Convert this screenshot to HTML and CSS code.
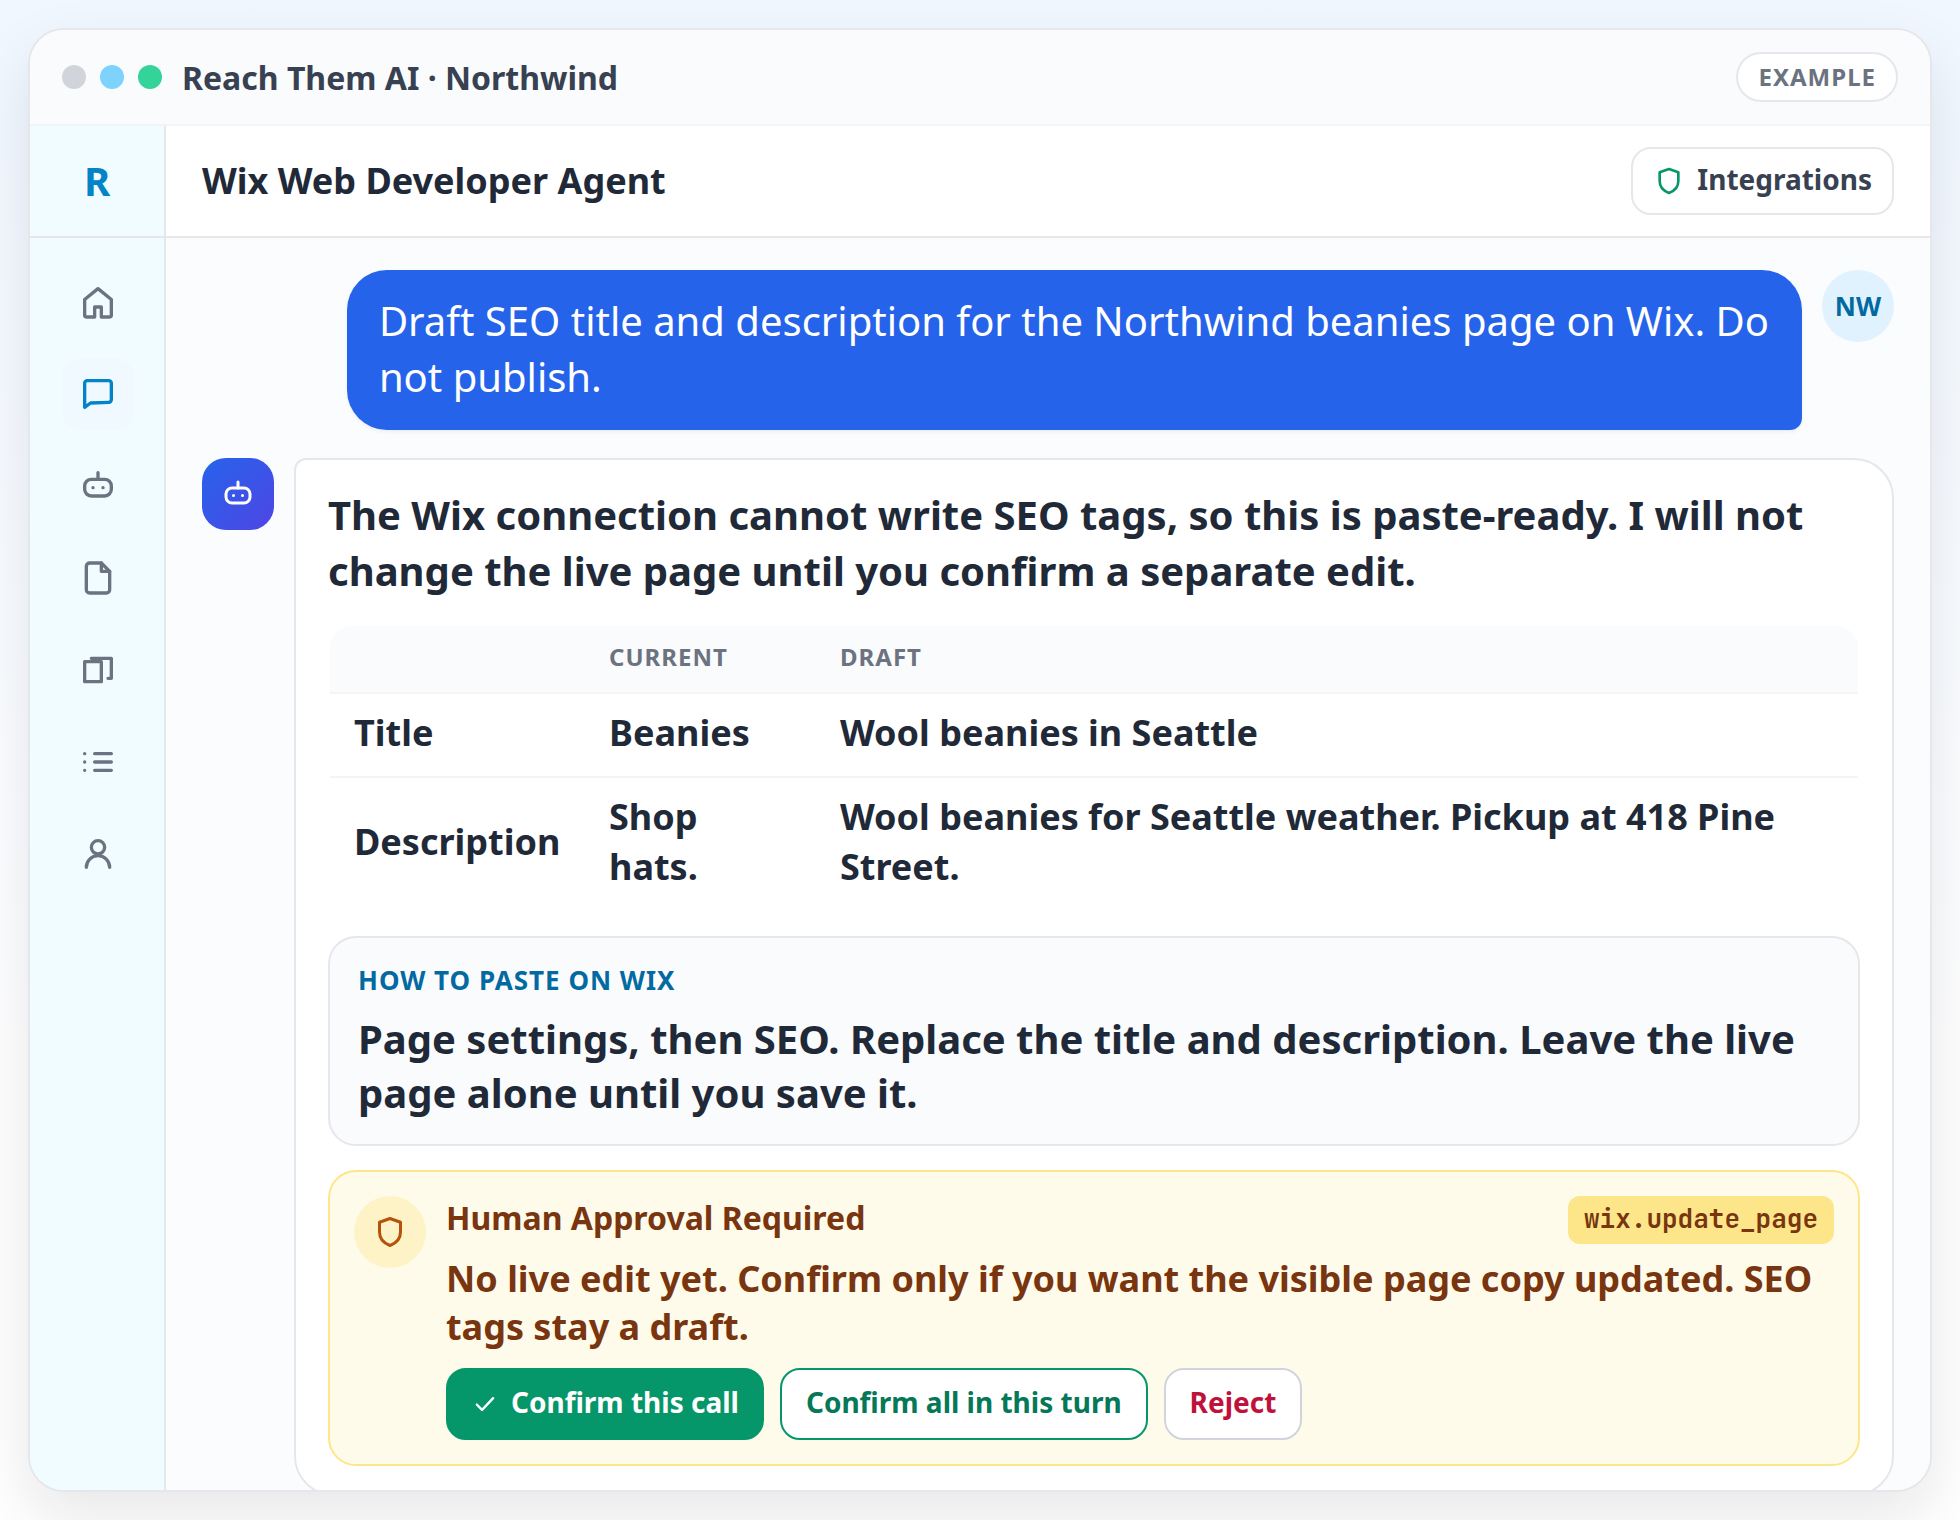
FILE: index.html
```html
<!DOCTYPE html>
<html lang="en">

<head>
  <meta charset="utf-8">
  <title>Reach Them AI · Northwind</title>
  <meta name="viewport" content="width=device-width, initial-scale=1.0">
  <link rel="stylesheet" href="styles.css">
</head>

<body>
  <div class="window">
    <header class="titlebar">
      <span class="dot dot-gray"></span>
      <span class="dot dot-blue"></span>
      <span class="dot dot-green"></span>
      <span class="titlebar-name">Reach Them AI · Northwind</span>
      <span class="pill">EXAMPLE</span>
    </header>

    <div class="app">
      <aside class="sidebar">
        <div class="logo">R</div>
        <nav class="nav">
          <a href="#home" class="nav-item" aria-label="Home">
            <svg class="icon" viewBox="0 0 24 24"><path d="M4 10.5 12 4l8 6.5V20a1 1 0 0 1-1 1h-5v-6h-4v6H5a1 1 0 0 1-1-1z"/></svg>
          </a>
          <a href="#chat" class="nav-item active" aria-label="Chat">
            <svg class="icon" viewBox="0 0 24 24"><path d="M4 20V5.5A1.5 1.5 0 0 1 5.5 4h13A1.5 1.5 0 0 1 20 5.5v10a1.5 1.5 0 0 1-1.5 1.5L7.5 17.4z"/></svg>
          </a>
          <a href="#agents" class="nav-item" aria-label="Agents">
            <svg class="icon" viewBox="0 0 24 24"><rect x="4" y="8" width="16" height="10" rx="4"/><path d="M12 8V4M9 13h.01M15 13h.01"/></svg>
          </a>
          <a href="#files" class="nav-item" aria-label="Files">
            <svg class="icon" viewBox="0 0 24 24"><path d="M7 3h7l5 5v11a2 2 0 0 1-2 2H7a2 2 0 0 1-2-2V5a2 2 0 0 1 2-2z"/><path d="M14 3v5h5"/></svg>
          </a>
          <a href="#library" class="nav-item" aria-label="Library">
            <svg class="icon" viewBox="0 0 24 24"><path d="M4 7h10v12H4zM8 5h12v12h-2"/></svg>
          </a>
          <a href="#tasks" class="nav-item" aria-label="Tasks">
            <svg class="icon" viewBox="0 0 24 24"><path d="M10 7h10M10 12h10M10 17h10M4 7h.01M4 12h.01M4 17h.01"/></svg>
          </a>
          <a href="#profile" class="nav-item" aria-label="Profile">
            <svg class="icon" viewBox="0 0 24 24"><circle cx="12" cy="8" r="4"/><path d="M5 20a7 7 0 0 1 14 0"/></svg>
          </a>
        </nav>
      </aside>

      <main class="main">
        <div class="topbar">
          <h1>Wix Web Developer Agent</h1>
          <button type="button" class="btn btn-integrations">
            <svg class="icon icon-shield" viewBox="0 0 24 24"><path d="M12 3l7 2.5V12c0 4.5-3 7.5-7 9-4-1.5-7-4.5-7-9V5.5z"/></svg>
            <span>Integrations</span>
          </button>
        </div>

        <div class="chat">
          <div class="row row-user">
            <p class="bubble">Draft SEO title and description for the Northwind beanies page on Wix. Do not publish.</p>
            <span class="avatar">NW</span>
          </div>

          <div class="row">
            <span class="avatar avatar-agent">
              <svg class="icon icon-agent" viewBox="0 0 24 24"><rect x="4" y="8" width="16" height="10" rx="4"/><path d="M12 8V4M9 13h.01M15 13h.01"/></svg>
            </span>
            <div class="card">
              <p class="lead">The Wix connection cannot write SEO tags, so this is paste-ready. I will not change the live page until you confirm a separate edit.</p>

              <div class="table-wrap">
                <table>
                  <thead>
                    <tr>
                      <th class="col-name" aria-label="Field"></th>
                      <th class="col-current">CURRENT</th>
                      <th>DRAFT</th>
                    </tr>
                  </thead>
                  <tbody>
                    <tr>
                      <td>Title</td>
                      <td>Beanies</td>
                      <td>Wool beanies in Seattle</td>
                    </tr>
                    <tr>
                      <td>Description</td>
                      <td>Shop hats.</td>
                      <td>Wool beanies for Seattle weather. Pickup at 418 Pine Street.</td>
                    </tr>
                  </tbody>
                </table>
              </div>

              <section class="howto">
                <h2>HOW TO PASTE ON WIX</h2>
                <p>Page settings, then SEO. Replace the title and description. Leave the live page alone until you save it.</p>
              </section>

              <section class="approval">
                <span class="approval-icon">
                  <svg class="icon" viewBox="0 0 24 24"><path d="M12 3l7 2.5V12c0 4.5-3 7.5-7 9-4-1.5-7-4.5-7-9V5.5z"/></svg>
                </span>
                <div class="approval-body">
                  <div class="approval-head">
                    <h2>Human Approval Required</h2>
                    <code>wix.update_page</code>
                  </div>
                  <p>No live edit yet. Confirm only if you want the visible page copy updated. SEO tags stay a draft.</p>
                  <div class="actions">
                    <button type="button" class="btn btn-confirm">
                      <svg class="icon icon-check" viewBox="0 0 24 24"><path d="M5 12.5l4.5 4.5L19 7"/></svg>
                      <span>Confirm this call</span>
                    </button>
                    <button type="button" class="btn btn-all"><span>Confirm all in this turn</span></button>
                    <button type="button" class="btn btn-reject"><span>Reject</span></button>
                  </div>
                </div>
              </section>
            </div>
          </div>
        </div>
      </main>
    </div>
  </div>
</body>

</html>
```
FILE: styles.css
```css
* {
  box-sizing: border-box;
  margin: 0;
}

body {
  height: 100vh;
  padding: 28px;
  background: linear-gradient(#f0f7ff, #ffffff 70%);
  font-family: "Noto Sans", sans-serif;
  color: #1f2937;
}

.window {
  height: 100%;
  display: flex;
  flex-direction: column;
  overflow: hidden;
  border: 2px solid #e5e7eb;
  border-radius: 36px;
  background: #ffffff;
  box-shadow: 0 24px 60px rgba(15, 23, 42, 0.1);
}

/* title bar */
.titlebar {
  flex: none;
  display: flex;
  align-items: center;
  gap: 14px;
  height: 96px;
  padding: 0 32px;
  background: #fafbfc;
  border-bottom: 2px solid #f3f4f6;
}

.dot {
  width: 24px;
  height: 24px;
  border-radius: 50%;
}

.dot-gray {
  background: #d1d5db;
}

.dot-blue {
  background: #7dd3fc;
}

.dot-green {
  background: #34d399;
}

.titlebar-name {
  margin-left: 6px;
  font-size: 32px;
  font-weight: 700;
  color: #374151;
}

.pill {
  margin-left: auto;
  padding: 6px 20px;
  border: 2px solid #e5e7eb;
  border-radius: 25px;
  background: #ffffff;
  font-size: 24px;
  line-height: 34px;
  font-weight: 700;
  letter-spacing: 1px;
  color: #6b7280;
}

.app {
  flex: 1;
  min-height: 0;
  display: flex;
}

/* sidebar */
.sidebar {
  flex: none;
  width: 136px;
  background: #f0fcff;
  border-right: 2px solid #e5e7eb;
}

.logo {
  display: flex;
  align-items: center;
  justify-content: center;
  height: 112px;
  padding-bottom: 2px;
  border-bottom: 2px solid #e5e7eb;
  font-size: 40px;
  font-weight: 700;
  color: #0284c7;
}

.nav {
  display: flex;
  flex-direction: column;
  align-items: center;
  gap: 20px;
  padding: 28px 0 0 2px;
}

.nav-item {
  display: flex;
  align-items: center;
  justify-content: center;
  width: 72px;
  height: 72px;
  border-radius: 20px;
  color: #6b7280;
}

.nav-item.active {
  background: #f0f9ff;
  color: #0284c7;
}

.icon {
  flex: none;
  width: 40px;
  height: 40px;
  fill: none;
  stroke: currentColor;
  stroke-width: 2;
  stroke-linecap: round;
  stroke-linejoin: round;
}

/* main column */
.main {
  flex: 1;
  min-width: 0;
  display: flex;
  flex-direction: column;
}

.topbar {
  flex: none;
  display: flex;
  align-items: center;
  justify-content: space-between;
  height: 112px;
  padding: 0 36px;
  border-bottom: 2px solid #e5e7eb;
}

.topbar h1 {
  padding-bottom: 2px;
  font-size: 36px;
  font-weight: 700;
}

.btn {
  display: flex;
  align-items: center;
  gap: 12px;
  height: 72px;
  padding: 0 24px;
  border: 2px solid #e5e7eb;
  border-radius: 20px;
  background: #ffffff;
  font-family: inherit;
  font-size: 28px;
  font-weight: 700;
  color: #374151;
}

.btn span {
  padding-bottom: 5px;
}

.btn-integrations {
  height: 68px;
  padding: 0 20px;
}

.icon-shield {
  width: 32px;
  height: 32px;
  color: #059669;
}

.chat {
  flex: 1;
  min-height: 0;
  overflow: hidden;
  display: flex;
  flex-direction: column;
  gap: 28px;
  padding: 32px 36px;
  background: #fafcfe;
}

.row {
  flex: none;
  display: flex;
  align-items: flex-start;
  gap: 20px;
}

.row-user {
  justify-content: flex-end;
}

.bubble {
  max-width: 86%;
  padding: 23px 32px 25px;
  border-radius: 40px 40px 12px 40px;
  background: #2563eb;
  box-shadow: 0 2px 4px rgba(15, 23, 42, 0.06);
  font-size: 40px;
  line-height: 56px;
  color: #ffffff;
}

.avatar {
  flex: none;
  display: flex;
  align-items: center;
  justify-content: center;
  width: 72px;
  height: 72px;
  border-radius: 50%;
  background: #e0f2fe;
  font-size: 26px;
  font-weight: 700;
  color: #0369a1;
}

.avatar-agent {
  border-radius: 24px;
  background: linear-gradient(135deg, #2563eb, #4f46e5);
  color: #ffffff;
}

.icon-agent {
  width: 36px;
  height: 36px;
}

.card {
  flex: 1;
  min-width: 0;
  display: flex;
  flex-direction: column;
  gap: 24px;
  padding: 27px 32px 28px;
  border: 2px solid #e5e7eb;
  border-radius: 12px 40px 40px 40px;
  background: #ffffff;
}

.lead {
  padding-bottom: 1px;
  font-size: 40px;
  line-height: 56px;
  font-weight: 700;
}

/* current / draft table */
.table-wrap {
  overflow: hidden;
  border: 2px solid #ffffff;
  border-radius: 24px;
}

table {
  width: 100%;
  border-collapse: separate;
  border-spacing: 0;
  text-align: left;
}

th {
  padding: 14px 24px 18px;
  background: #fafbfc;
  border-bottom: 2px solid #f3f4f6;
  font-size: 24px;
  line-height: 34px;
  font-weight: 700;
  letter-spacing: 1px;
  color: #6b7280;
}

td {
  padding: 14px 24px 18px;
  font-size: 36px;
  line-height: 50px;
  font-weight: 700;
}

tr:not(:last-child) td {
  border-bottom: 2px solid #f3f4f6;
}

.col-name {
  width: 255px;
}

.col-current {
  width: 231px;
}

.howto {
  padding: 24px 28px;
  border: 2px solid #e5e7eb;
  border-radius: 28px;
  background: #f9fbfd;
}

.howto h2 {
  margin-bottom: 14px;
  font-size: 26px;
  line-height: 36px;
  font-weight: 700;
  letter-spacing: 1px;
  color: #0369a1;
}

.howto p {
  font-size: 40px;
  line-height: 54px;
  font-weight: 700;
}

/* approval box */
.approval {
  display: flex;
  align-items: flex-start;
  gap: 20px;
  padding: 24px;
  border: 2px solid #fde68a;
  border-radius: 28px;
  background: #fffbeb;
  color: #78350f;
}

.approval-icon {
  flex: none;
  display: flex;
  align-items: center;
  justify-content: center;
  width: 72px;
  height: 72px;
  border-radius: 50%;
  background: #fef3c7;
  color: #b45309;
}

.approval-icon .icon {
  width: 36px;
  height: 36px;
}

.approval-body {
  flex: 1;
  min-width: 0;
}

.approval-head {
  display: flex;
  align-items: flex-start;
  justify-content: space-between;
}

.approval-head h2 {
  font-size: 32px;
  line-height: 44px;
  font-weight: 700;
}

.approval-head code {
  padding: 5px 16px 7px;
  border-radius: 12px;
  background: #fde68a;
  font-family: "JetBrains Mono", "Liberation Mono", monospace;
  font-size: 26px;
  line-height: 36px;
  font-weight: 700;
}

.approval-body p {
  margin: 11px 0 17px;
  font-size: 36px;
  line-height: 48px;
  font-weight: 700;
}

.actions {
  display: flex;
  gap: 16px;
}

.btn-confirm {
  padding: 0 23px;
  border-color: #059669;
  background: #059669;
  color: #ffffff;
}

.icon-check {
  width: 28px;
  height: 28px;
}

.btn-all {
  border-color: #059669;
  color: #047857;
}

.btn-reject {
  border-color: #d1d5db;
  color: #be123c;
}
```
